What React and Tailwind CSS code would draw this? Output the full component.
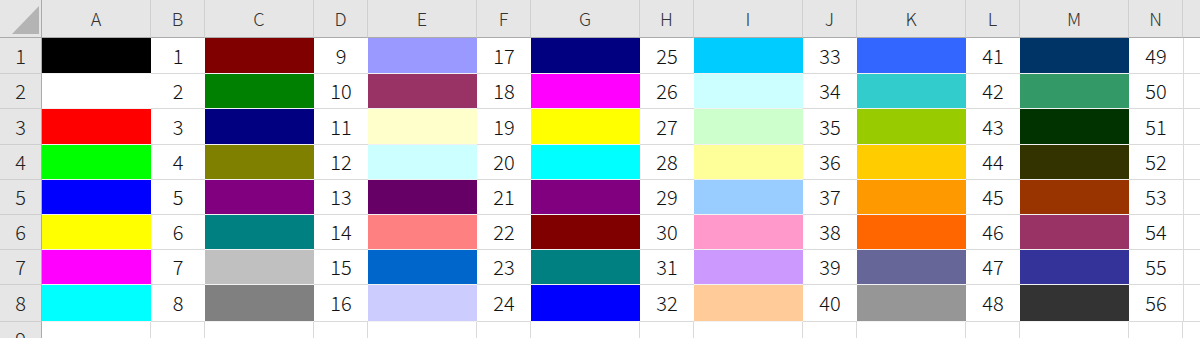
const palette = [
  '#000000', '#FFFFFF', '#FF0000', '#00FF00', '#0000FF', '#FFFF00', '#FF00FF', '#00FFFF',
  '#800000', '#008000', '#000080', '#808000', '#800080', '#008080', '#C0C0C0', '#808080',
  '#9999FF', '#993366', '#FFFFCC', '#CCFFFF', '#660066', '#FF8080', '#0066CC', '#CCCCFF',
  '#000080', '#FF00FF', '#FFFF00', '#00FFFF', '#800080', '#800000', '#008080', '#0000FF',
  '#00CCFF', '#CCFFFF', '#CCFFCC', '#FFFF99', '#99CCFF', '#FF99CC', '#CC99FF', '#FFCC99',
  '#3366FF', '#33CCCC', '#99CC00', '#FFCC00', '#FF9900', '#FF6600', '#666699', '#969696',
  '#003366', '#339966', '#003300', '#333300', '#993300', '#993366', '#333399', '#333333',
];

const letters = ['A', 'B', 'C', 'D', 'E', 'F', 'G', 'H', 'I', 'J', 'K', 'L', 'M', 'N'];
const rows = [1, 2, 3, 4, 5, 6, 7, 8];

const font = { fontFamily: '"Noto Sans CJK JP", "Noto Sans", sans-serif' };

function Corner() {
  return (
    <div className="bg-[#e6e6e6] border-r border-b border-r-[#ababab] border-b-[#ababab] relative">
      <svg width="41" height="37" className="absolute left-0 top-0">
        <polygon points="12,34 39,34 39,6" fill="#b4b4b4" />
      </svg>
    </div>
  );
}

export default function App() {
  return (
    <div
      className="w-[1200px] h-[338px] overflow-hidden bg-white font-light grid grid-cols-[42px_repeat(7,109px_54px)_1fr] grid-rows-[38px_36px_35px_36px_35px_35px_35px_35px_37px_40px]"
      style={font}
    >
      {/* header row */}
      <Corner />
      {letters.map((l) => (
        <div
          key={l}
          className="bg-[#e6e6e6] border-b border-r border-b-[#ababab] border-r-[#d0d0d0] flex items-center justify-center text-[18px] text-[#333]"
        >
          {l}
        </div>
      ))}
      <div className="bg-[#e6e6e6] border-b border-b-[#ababab]" />

      {/* data rows */}
      {rows.map((r) => (
        <Row key={r} r={r} />
      ))}

      {/* partial row 9 */}
      <div className="bg-[#e6e6e6] border-r border-r-[#ababab] flex justify-center pt-[7px] text-[20px] text-[#222] leading-none">
        9
      </div>
      {letters.map((l) => (
        <div key={l} className="border-r border-r-[#dadada]" />
      ))}
      <div />
    </div>
  );
}

function Row({ r }) {
  const cells = [];
  for (let c = 0; c < 7; c++) {
    const n = c * 8 + r;
    cells.push(
      <div
        key={'c' + c}
        className="border-b border-b-[#f2f2f2]"
        style={{ backgroundColor: palette[n - 1] }}
      />
    );
    cells.push(
      <div
        key={'n' + c}
        className="border-b border-b-[#dadada] flex items-center justify-center text-[20px] text-[#111]"
      >
        {n}
      </div>
    );
  }
  return (
    <>
      <div className="bg-[#e6e6e6] border-r border-b border-r-[#ababab] border-b-[#cfcfcf] flex items-center justify-center text-[20px] text-[#222]">
        {r}
      </div>
      {cells}
      <div className="border-l border-b border-l-[#dadada] border-b-[#dadada]" />
    </>
  );
}
